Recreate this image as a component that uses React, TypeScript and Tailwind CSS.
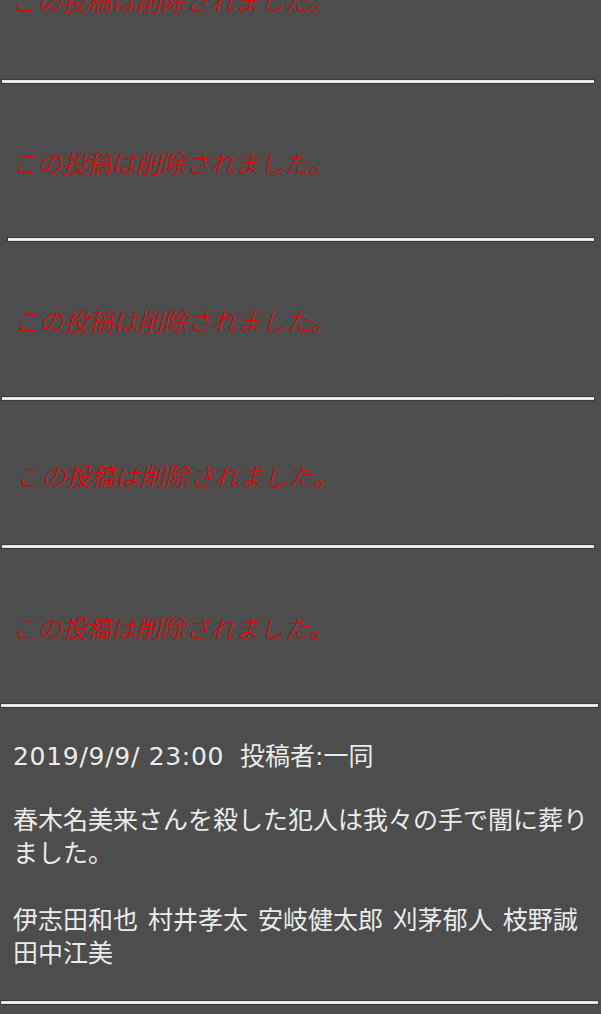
import React from "react";

const deleted = "この投稿は削除されました。";

function Rule({ className }: { className: string }) {
    return (
        <div className={"h-[5px] border border-[#3a3a3a] bg-[linear-gradient(#d4d4d4,#f6f6f6,#d4d4d4)] " + className}></div>
    );
}

function Deleted({ className }: { className: string }) {
    return (
        <p className={"text-[25px] leading-[34px] italic font-light tracking-[-0.3px] text-[#e00000] " + className}>
            {deleted}
        </p>
    );
}

export default function App() {
    return (
        <div className="h-[1014px] overflow-hidden bg-[#4d4d4d] font-['Noto_Sans_CJK_JP',sans-serif]">
            <div className="-mt-[78px] flex flex-col">
                <Deleted className="pl-[12px] pt-[61px] pb-[62px]" />
                <Rule className="ml-[1px] w-[594px]" />

                <Deleted className="pl-[12px] pt-[61px] pb-[58px]" />
                <Rule className="ml-[7px] w-[588px]" />

                <Deleted className="pl-[14px] pt-[61px] pb-[59px]" />
                <Rule className="ml-[1px] w-[594px]" />

                <Deleted className="pl-[16px] pt-[57px] pb-[52px]" />
                <Rule className="ml-[1px] w-[594px]" />

                <Deleted className="pl-[12px] pt-[61px] pb-[59px]" />
                <Rule className="w-[599px]" />

                <div className="flex flex-col pl-[13px] pr-[5px] pt-[32px] pb-[30px] text-[25px] leading-[33px] text-[#ebebeb] font-['DejaVu_Sans','Noto_Sans_CJK_JP',sans-serif]">
                    <p>
                        <span className="tracking-[0.7px]">2019/9/9/ 23:00</span>&nbsp;&nbsp;投稿者:一同
                    </p>
                    <p className="mt-[31px]">春木名美来さんを殺した犯人は我々の手で闇に葬りました。</p>
                    <p className="mt-[34px] [word-spacing:2px]">伊志田和也 村井孝太 安岐健太郎 刈茅郁人 枝野誠 田中江美</p>
                </div>
                <Rule className="w-[599px]" />
            </div>
        </div>
    );
}
